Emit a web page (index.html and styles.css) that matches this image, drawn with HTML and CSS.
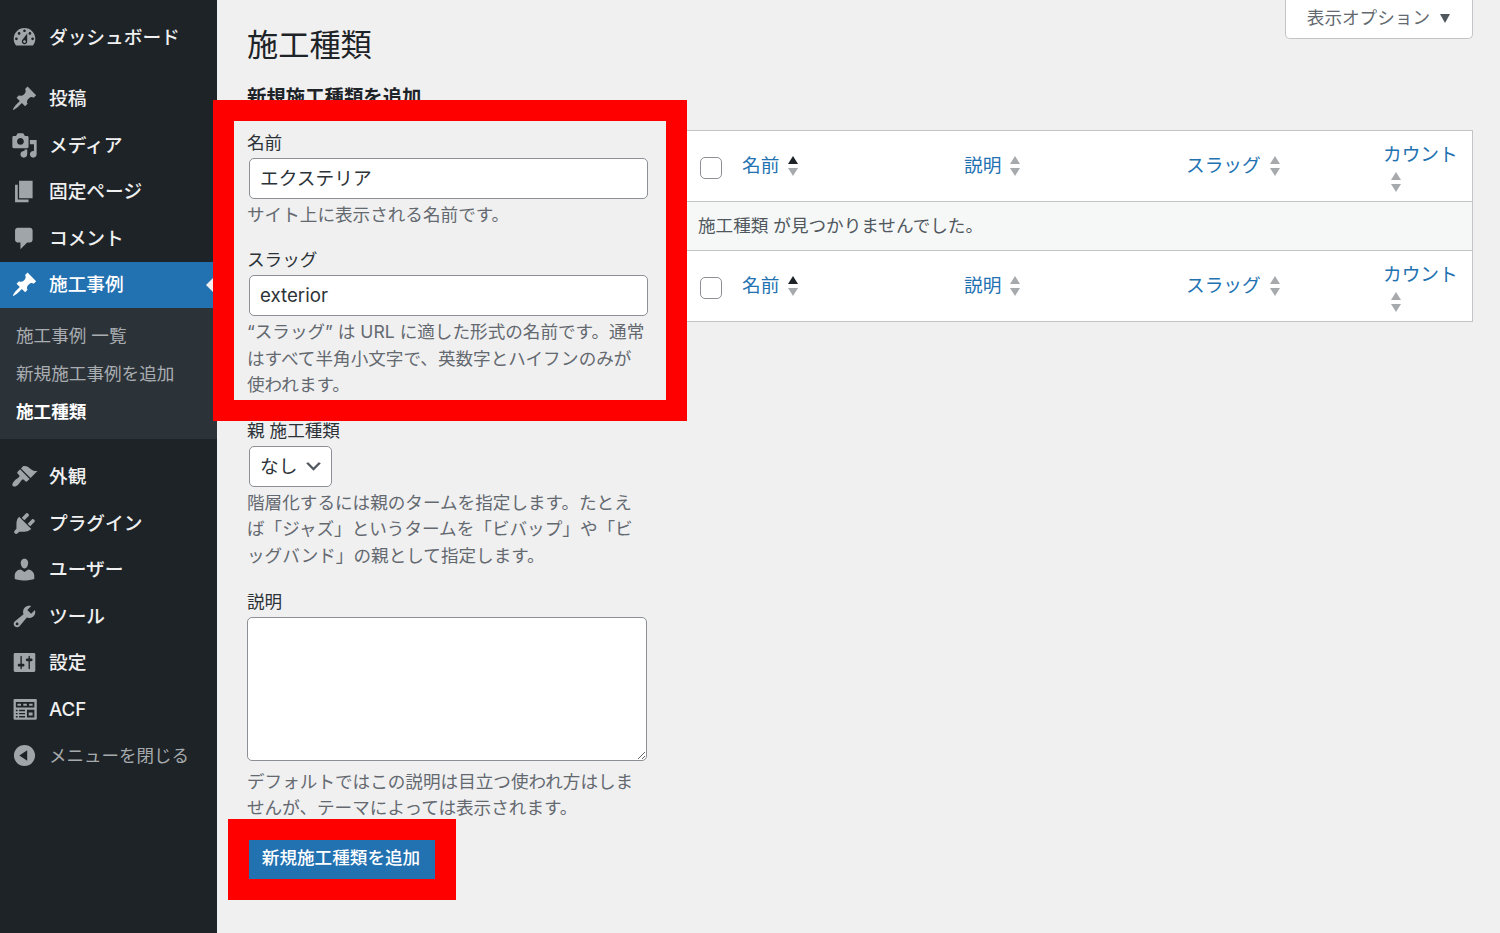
FILE: index.html
```html
<!DOCTYPE html>
<html lang="ja">
<head>
    <meta charset="UTF-8">
    <meta name="viewport" content="width=device-width, initial-scale=1.0">
    <title>施工種類</title>
    <link rel="stylesheet" href="styles.css">
</head>
<body>

<div class="layout">
    <nav class="sidebar">
        <ul class="menu">
            <li class="menu-item">
                <svg class="icon" viewBox="0 0 20 20"><path fill-rule="evenodd" d="M3.76 16h12.48C17.34 14.63 18 12.9 18 11c0-4.41-3.58-8-8-8s-8 3.59-8 8c0 1.9.66 3.63 1.76 5zM10 4c.55 0 1 .45 1 1s-.45 1-1 1-1-.45-1-1 .45-1 1-1zM6 6c.55 0 1 .45 1 1s-.45 1-1 1-1-.45-1-1 .45-1 1-1zm8 0c.55 0 1 .45 1 1s-.45 1-1 1-1-.45-1-1 .45-1 1-1zm-5.37 5.55L12 7v6c0 1.1-.9 2-2 2s-2-.9-2-2c0-.57.24-1.08.63-1.45zM4 10c.55 0 1 .45 1 1s-.45 1-1 1-1-.45-1-1 .45-1 1-1zm12 0c.55 0 1 .45 1 1s-.45 1-1 1-1-.45-1-1 .45-1 1-1zm-5 3c0-.55-.45-1-1-1s-1 .45-1 1 .45 1 1 1 1-.45 1-1z"/></svg>
                <span>ダッシュボード</span>
            </li>
            <li class="separator"></li>
            <li class="menu-item">
                <svg class="icon" viewBox="0 0 20 20"><path d="M10.44 3.02l1.82-1.82 6.36 6.35-1.83 1.82c-1.05-.68-2.48-.57-3.41.36l-.75.75c-.92.93-1.04 2.35-.35 3.41l-1.83 1.82-2.41-2.41-2.8 2.79c-.42.42-3.38 2.71-3.8 2.29s1.86-3.39 2.28-3.81l2.79-2.79L4.1 9.36l1.83-1.82c1.05.69 2.48.57 3.4-.36l.75-.75c.93-.92 1.05-2.35.36-3.41z"/></svg>
                <span>投稿</span>
            </li>
            <li class="menu-item">
                <svg class="icon" viewBox="0 0 20 20"><path fill-rule="evenodd" d="M13 11V4c0-.55-.45-1-1-1h-1.67L9 1H5L3.67 3H2c-.55 0-1 .45-1 1v7c0 .55.45 1 1 1h10c.55 0 1-.45 1-1zM7 4.5c1.38 0 2.5 1.12 2.5 2.5S8.38 9.5 7 9.5 4.5 8.38 4.5 7 5.62 4.5 7 4.5zM14 6h5v10.5c0 1.38-1.12 2.5-2.5 2.5S14 17.88 14 16.5s1.12-2.5 2.5-2.5c.17 0 .34.02.5.05V9h-3V6zm-4 8.05V13h2v3.5c0 1.38-1.12 2.5-2.5 2.5S7 17.88 7 16.5 8.12 14 9.5 14c.17 0 .34.02.5.05z"/></svg>
                <span>メディア</span>
            </li>
            <li class="menu-item">
                <svg class="icon" viewBox="0 0 20 20"><path d="M6 15V2h10v13H6zm-1 1h8v2H3V5h2v11z"/></svg>
                <span>固定ページ</span>
            </li>
            <li class="menu-item">
                <svg class="icon" viewBox="0 0 20 20"><path d="M5 2h9c1.1 0 2 .9 2 2v7c0 1.1-.9 2-2 2h-2l-5 5v-5H5c-1.1 0-2-.9-2-2V4c0-1.1.9-2 2-2z"/></svg>
                <span>コメント</span>
            </li>
            <li class="menu-item current">
                <svg class="icon" viewBox="0 0 20 20"><path d="M10.44 3.02l1.82-1.82 6.36 6.35-1.83 1.82c-1.05-.68-2.48-.57-3.41.36l-.75.75c-.92.93-1.04 2.35-.35 3.41l-1.83 1.82-2.41-2.41-2.8 2.79c-.42.42-3.38 2.71-3.8 2.29s1.86-3.39 2.28-3.81l2.79-2.79L4.1 9.36l1.83-1.82c1.05.69 2.48.57 3.4-.36l.75-.75c.93-.92 1.05-2.35.36-3.41z"/></svg>
                <span>施工事例</span>
            </li>
            <li>
                <ul class="submenu">
                    <li>施工事例 一覧</li>
                    <li>新規施工事例を追加</li>
                    <li class="active">施工種類</li>
                </ul>
            </li>
            <li class="separator"></li>
            <li class="menu-item">
                <svg class="icon" viewBox="0 0 20 20"><path d="M14.48 11.06L7.41 3.99l1.5-1.5c.5-.56 2.3-.47 3.51.32 1.21.8 1.43 1.28 2.91 2.1 1.18.64 2.45 1.26 4.45.85zm-.71.71L6.7 4.7 4.93 6.47c-.39.39-.39 1.02 0 1.41l1.06 1.06c.39.39.39 1.03 0 1.42-.6.6-1.43 1.11-2.21 1.69-.35.26-.7.53-1.01.84C1.43 14.23.4 16.08 1.4 17.07c.99 1 2.84-.03 4.18-1.36.31-.31.58-.66.85-1.02.57-.78 1.08-1.61 1.69-2.21.39-.39 1.02-.39 1.41 0l1.06 1.06c.39.39 1.02.39 1.41 0z"/></svg>
                <span>外観</span>
            </li>
            <li class="menu-item">
                <svg class="icon" viewBox="0 0 20 20"><path d="M13.11 4.36L9.87 7.6 8 5.73l3.24-3.24c.35-.34 1.05-.2 1.56.32.52.51.66 1.21.31 1.55zm-8 1.77l.91-1.12 9.01 9.01-1.19.84c-.71.71-2.63 1.16-3.82 1.16H6.14L4.9 17.26c-.59.59-1.54.59-2.12 0-.59-.58-.59-1.53 0-2.12l1.24-1.24v-3.88c0-1.13.4-3.19 1.09-3.89zm7.26 3.97l3.24-3.24c.34-.35 1.04-.21 1.55.31.52.51.66 1.21.31 1.55l-3.24 3.25z"/></svg>
                <span>プラグイン</span>
            </li>
            <li class="menu-item">
                <svg class="icon" viewBox="0 0 20 20"><path d="M10 9.25c-2.27 0-2.73-3.44-2.73-3.44C7 4.02 7.82 2 9.97 2c2.16 0 2.98 2.02 2.71 3.81 0 0-.41 3.44-2.68 3.44zm0 2.57L12.72 10c2.39 0 4.52 2.33 4.52 4.53v2.49s-3.65 1.13-7.24 1.13c-3.65 0-7.24-1.13-7.24-1.13v-2.49c0-2.25 1.94-4.48 4.47-4.48z"/></svg>
                <span>ユーザー</span>
            </li>
            <li class="menu-item">
                <svg class="icon" viewBox="0 0 20 20"><path fill-rule="evenodd" d="M16.68 9.77c-1.34 1.34-3.3 1.67-4.95.99l-5.41 6.52c-.99.99-2.59.99-3.58 0s-.99-2.59 0-3.57l6.52-5.42c-.68-1.65-.35-3.61.99-4.95 1.28-1.28 3.12-1.62 4.72-1.06l-2.89 2.89 2.82 2.82 2.86-2.87c.53 1.58.18 3.39-1.08 4.65zM3.81 16.21c.4.39 1.04.39 1.43 0 .4-.4.4-1.04 0-1.43-.39-.4-1.03-.4-1.43 0-.39.39-.39 1.03 0 1.43z"/></svg>
                <span>ツール</span>
            </li>
            <li class="menu-item">
                <svg class="icon" viewBox="0 0 20 20"><path fill-rule="evenodd" d="M18 16V4c0-.55-.45-1-1-1H3c-.55 0-1 .45-1 1v12c0 .55.45 1 1 1h14c.55 0 1-.45 1-1zM8 11h1c.55 0 1 .45 1 1s-.45 1-1 1H8v1.5c0 .28-.22.5-.5.5s-.5-.22-.5-.5V13H6c-.55 0-1-.45-1-1s.45-1 1-1h1V5.5c0-.28.22-.5.5-.5s.5.22.5.5V11zm5-2h-1c-.55 0-1-.45-1-1s.45-1 1-1h1V5.5c0-.28.22-.5.5-.5s.5.22.5.5V7h1c.55 0 1 .45 1 1s-.45 1-1 1h-1v5.5c0 .28-.22.5-.5.5s-.5-.22-.5-.5V9z"/></svg>
                <span>設定</span>
            </li>
            <li class="menu-item">
                <svg class="icon" viewBox="0 0 20 20"><path fill-rule="evenodd" d="M2.5 2.3h16a.6.6 0 0 1 .6.6v14a.6.6 0 0 1-.6.6h-16a.6.6 0 0 1-.6-.6v-14a.6.6 0 0 1 .6-.6zM3.600 4.500v4h13.700v-4zM4.800 5.800h2.600v1.400H4.800zM9.100 5.800h2.600v1.400H9.100zM13.400 5.800h2.600v1.400h-2.600zM3.600 10.200h1.300v1.100H3.600zM6 10.200h4.400v1.100H6zM3.600 12.500h1.300v1.100H3.600zM6 12.500h4.400v1.100H6zM3.600 14.800h1.300v1.100H3.600zM6 14.800h4.400v1.100H6zM11.800 10.200h5.500v5.700h-5.500zM13.100 12.200h2.900v2.300h-2.900z"/></svg>
                <span>ACF</span>
            </li>
            <li class="menu-item collapse">
                <svg class="icon" viewBox="0 0 20 20"><path fill-rule="evenodd" d="M10 2.16c4.33 0 7.84 3.51 7.84 7.84s-3.51 7.84-7.84 7.84S2.16 14.33 2.16 10 5.71 2.16 10 2.16zm2 11.72V6.12L6.18 9.97z"/></svg>
                <span>メニューを閉じる</span>
            </li>
        </ul>
    </nav>

    <main class="content">
        <header class="page-head">
            <h1>施工種類</h1>
            <button class="screen-options">表示オプション <span class="tri-down"></span></button>
        </header>

        <div class="columns">
            <form class="add-form">
                <h2>新規施工種類を追加</h2>
                <div class="field">
                    <label for="name">名前</label>
                    <input type="text" id="name" class="kana" value="エクステリア">
                    <p>サイト上に表示される名前です。</p>
                </div>
                <div class="field">
                    <label for="slug">スラッグ</label>
                    <input type="text" id="slug" value="exterior">
                    <p>“スラッグ” は URL に適した形式の名前です。通常<br>はすべて半角小文字で、英数字とハイフンのみが<br>使われます。</p>
                </div>
                <div class="field">
                    <label for="parent">親 施工種類</label>
                    <div class="select">
                        <select id="parent"><option>なし</option></select>
                        <svg class="chevron" viewBox="0 0 20 20"><path d="M5 6l5 5 5-5 2 1-7 7-7-7 2-1z"/></svg>
                    </div>
                    <p>階層化するには親のタームを指定します。たとえ<br>ば「ジャズ」というタームを「ビバップ」や「ビ<br>ッグバンド」の親として指定します。</p>
                </div>
                <div class="field description">
                    <label for="description">説明</label>
                    <textarea id="description"></textarea>
                    <p>デフォルトではこの説明は目立つ使われ方はしま<br>せんが、テーマによっては表示されます。</p>
                </div>
                <button type="button" class="submit">新規施工種類を追加</button>
            </form>

            <section class="term-table">
                <div class="table-row">
                    <input type="checkbox">
                    <a class="col asc">名前<span class="sort"></span></a>
                    <a class="col">説明<span class="sort"></span></a>
                    <a class="col">スラッグ<span class="sort"></span></a>
                    <a class="col count">カウント<span class="sort"></span></a>
                </div>
                <div class="no-items">施工種類 が見つかりませんでした。</div>
                <div class="table-row">
                    <input type="checkbox">
                    <a class="col asc">名前<span class="sort"></span></a>
                    <a class="col">説明<span class="sort"></span></a>
                    <a class="col">スラッグ<span class="sort"></span></a>
                    <a class="col count">カウント<span class="sort"></span></a>
                </div>
            </section>
        </div>
    </main>
</div>

<div class="mark mark-fields"></div>
<div class="mark mark-submit"></div>

</body>
</html>
```
FILE: styles.css
```css
* {
    box-sizing: border-box;
}
body {
    margin: 0;
    background: #f0f0f0;
    color: #2c3338;
    font-family: Inter, "Noto Sans CJK JP", sans-serif;
    font-size: 17.6px;
    line-height: 26.5px;
    overflow: hidden;
}
h1, h2, p, ul {
    margin: 0;
    padding: 0;
}
ul {
    list-style: none;
}
.layout {
    display: flex;
    height: 933px;
}

/* sidebar */
.sidebar {
    width: 217px;
    flex: none;
    padding-top: 14px;
    background: #1d2327;
}
.menu-item {
    position: relative;
    display: flex;
    align-items: center;
    gap: 11px;
    height: 46.5px;
    padding-left: 11px;
    color: #f0f0f1;
    font-size: 18.7px;
    font-weight: 500;
    white-space: nowrap;
}
.menu-item span {
    padding-top: 1px;
}
.icon {
    width: 27px;
    height: 27px;
    flex: none;
    fill: #a0a5aa;
}
.separator {
    height: 15px;
}
.current {
    background: #2271b1;
    color: #fff;
}
.current .icon {
    fill: #fff;
}
.current::after {
    content: "";
    position: absolute;
    right: 0;
    top: 12.5px;
    border: 11px solid transparent;
    border-left: 0;
    border-right-color: #f0f0f0;
}
.submenu {
    height: 130.5px;
    padding: 9px 0 0 16px;
    background: #2c3338;
    color: #a9adb2;
}
.submenu li {
    height: 38px;
    line-height: 38px;
}
.submenu .active {
    color: #fff;
    font-weight: 700;
}
.collapse {
    color: #a7aaad;
    font-size: 17.5px;
    font-weight: 400;
}

/* content */
.content {
    flex: 1;
    padding: 0 27px 0 30px;
}
.page-head {
    display: flex;
    justify-content: space-between;
    align-items: flex-start;
    height: 82px;
}
h1 {
    padding-top: 24px;
    color: #1d2327;
    font-size: 31.2px;
    line-height: 42px;
    font-weight: 400;
}
.screen-options {
    display: flex;
    align-items: center;
    gap: 10px;
    height: 39px;
    padding: 0 22px 2px 21px;
    border: 1px solid #c3c4c7;
    border-top: 0;
    border-radius: 0 0 5px 5px;
    background: #fff;
    color: #646970;
    font: inherit;
}
.tri-down {
    border: 5.5px solid transparent;
    border-top: 9px solid #50575e;
    border-bottom: 0;
}
.columns {
    display: flex;
}
.add-form {
    width: 437px;
    flex: none;
}
h2 {
    height: 47.5px;
    color: #1d2327;
    font-size: 19.4px;
    line-height: 30px;
    font-weight: 700;
}
.field {
    margin-bottom: 19.2px;
}
.field label {
    display: block;
}
.field input,
.select {
    display: block;
    height: 41px;
    margin: 1.5px 0 3px 2px;
}
.field input,
.field textarea,
.field select {
    border: 1px solid #8c8f94;
    border-radius: 5px;
    background: #fff;
    color: #2c3338;
    font: inherit;
    font-size: 18.7px;
}
.field input {
    width: 399px;
    padding: 0 10px;
}
.field .kana {
    padding-bottom: 3px;
}
.field p {
    color: #646970;
    white-space: nowrap;
}
.select {
    position: relative;
    width: 83px;
}
.field select {
    width: 100%;
    height: 100%;
    padding: 2px 10px 0;
    appearance: none;
}
.chevron {
    position: absolute;
    right: 8px;
    top: 10px;
    width: 21px;
    height: 21px;
    fill: #50575e;
}
.field textarea {
    display: block;
    width: 400px;
    height: 144px;
    margin: 2px 0 7.5px;
}
.description {
    margin-bottom: 18px;
}
.submit {
    width: 186px;
    height: 39px;
    margin-left: 2px;
    padding: 0 2px 1px 0;
    border: 0;
    background: #2271b1;
    color: #fff;
    font: inherit;
    font-weight: 500;
    white-space: nowrap;
}

/* term list */
.term-table {
    flex: 1;
    height: 192px;
    margin-top: 48px;
    border: 1px solid #c3c4c7;
    background: #fff;
}
.table-row {
    display: grid;
    grid-template-columns: 57px 222px 222px 197px 1fr;
    height: 70px;
    padding-top: 11px;
}
.table-row input {
    appearance: none;
    width: 22px;
    height: 22px;
    margin: 15px 0 0 15px;
    border: 1px solid #8c8f94;
    border-radius: 5px;
    background: #fff;
}
.col {
    display: flex;
    gap: 9px;
    padding-top: 11px;
    color: #2271b1;
    font-size: 18.7px;
    white-space: nowrap;
}
.count {
    flex-direction: column;
    gap: 0;
    padding-top: 0;
}
.sort {
    display: flex;
    flex-direction: column;
    gap: 4px;
    padding-top: 3px;
}
.sort::before,
.sort::after {
    content: "";
    width: 0;
    border: 5.5px solid transparent;
}
.sort::before {
    border-top: 0;
    border-bottom: 8px solid #a7aaad;
}
.sort::after {
    border-bottom: 0;
    border-top: 8px solid #a7aaad;
}
.asc .sort::before {
    border-bottom-color: #1d2327;
}
.count .sort {
    padding: 3px 0 0 8px;
}
.no-items {
    height: 50px;
    padding: 11px 13px;
    border: solid #c3c4c7;
    border-width: 1px 0;
    background: #f6f7f7;
    color: #50575e;
}

/* red frames over the fields and the button */
.mark {
    position: absolute;
    border: 21px solid #f00;
}
.mark-fields {
    left: 213px;
    top: 100px;
    width: 474px;
    height: 321px;
}
.mark-submit {
    left: 228px;
    top: 819px;
    width: 228px;
    height: 81px;
}
```
